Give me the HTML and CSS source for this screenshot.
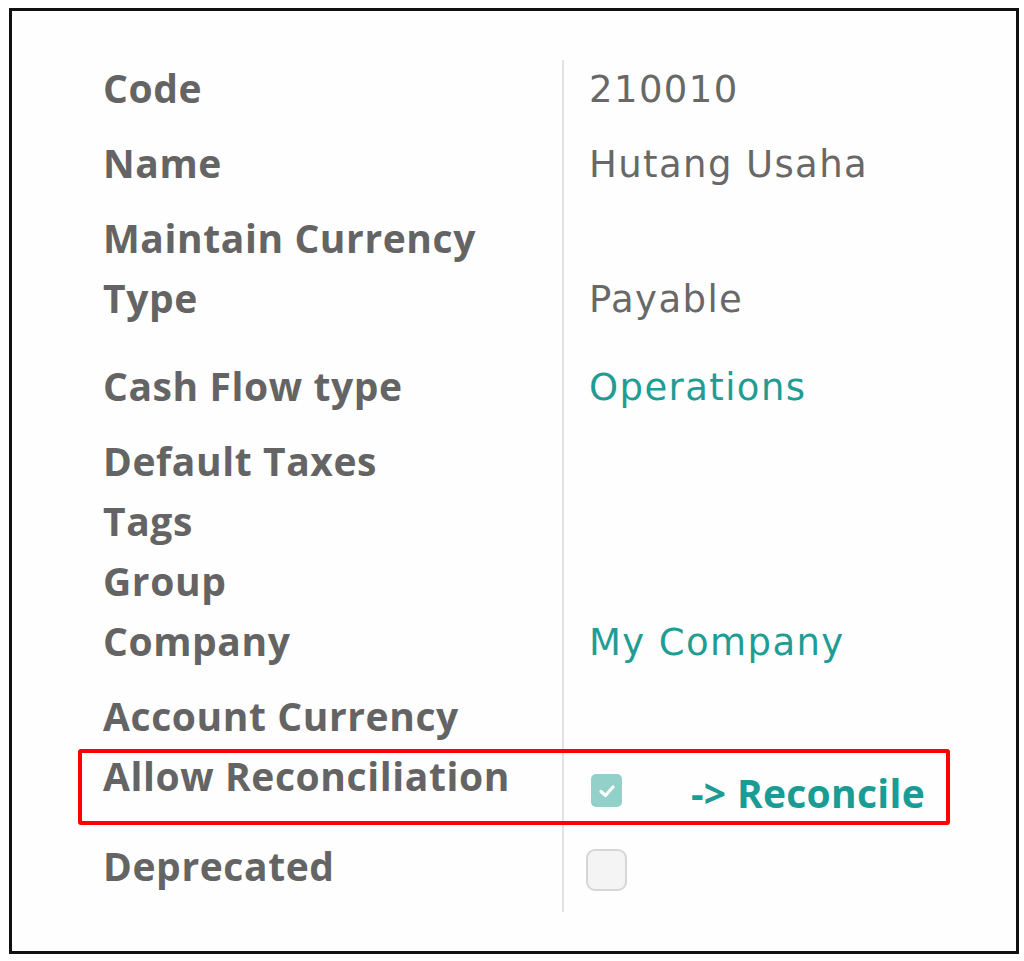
FILE: index.html
```html
<!DOCTYPE html>
<html>
<head>
    <title>Account</title>
    <link rel="stylesheet" href="styles.css">
</head>
<body>
    <div class="frame">
        <div class="sheet">
            <div class="row row-field">
                <div class="label">Code</div>
                <div class="value">210010</div>
            </div>
            <div class="row row-field">
                <div class="label">Name</div>
                <div class="value">Hutang Usaha</div>
            </div>
            <div class="row">
                <div class="label">Maintain Currency</div>
                <div class="value"></div>
            </div>
            <div class="row row-select">
                <div class="label">Type</div>
                <div class="value">Payable</div>
            </div>
            <div class="row row-field">
                <div class="label">Cash Flow type</div>
                <div class="value link">Operations</div>
            </div>
            <div class="row">
                <div class="label">Default Taxes</div>
                <div class="value"></div>
            </div>
            <div class="row">
                <div class="label">Tags</div>
                <div class="value"></div>
            </div>
            <div class="row">
                <div class="label">Group</div>
                <div class="value"></div>
            </div>
            <div class="row row-field">
                <div class="label">Company</div>
                <div class="value link">My Company</div>
            </div>
            <div class="row">
                <div class="label">Account Currency</div>
                <div class="value"></div>
            </div>
            <div class="row row-check">
                <div class="label">Allow Reconciliation</div>
                <div class="value check-cell">
                    <span class="checkbox checked">
                        <svg width="20" height="20" viewBox="0 0 20 20"><polyline points="4,10.5 8.5,14.5 16,6" fill="none" stroke="#fff" stroke-width="3.2" stroke-linecap="round" stroke-linejoin="round"/></svg>
                    </span>
                    <a class="reconcile">-&gt; Reconcile</a>
                </div>
            </div>
            <div class="row row-last">
                <div class="label">Deprecated</div>
                <div class="value">
                    <span class="checkbox empty"></span>
                </div>
            </div>
        </div>
        <!-- highlight around the reconciliation row -->
        <div class="highlight"></div>
    </div>
</body>
</html>
```

FILE: styles.css
```css
body {
    margin: 0;
    background-color: #ffffff;
}
.frame {
    position: relative;
    margin: 8px 0 0 9px;
    width: 1010px;
    height: 946px;
    box-sizing: border-box;
    border: 3px solid #111;
    background-color: #fefefe;
}
.sheet {
    padding: 49px 0 0 91px;
}
.row {
    display: flex;
    height: 60px;
}
.row-field {
    height: 75px;
}
.row-select {
    height: 88px;
}
.row-check {
    height: 90px;
}
.row-last {
    height: 74px;
}
.label {
    width: 459px;
    padding-top: 2px;
    font-family: "Open Sans", sans-serif;
    font-weight: 700;
    font-size: 39px;
    letter-spacing: 0.6px;
    line-height: 52px;
    color: #646464;
    white-space: nowrap;
}
.value {
    flex: 1;
    border-left: 2px solid #e2e2e2;
    padding: 4px 0 0 25px;
    font-family: "DejaVu Sans", sans-serif;
    font-size: 37px;
    letter-spacing: 1.4px;
    line-height: 52px;
    color: #686868;
    white-space: nowrap;
}
.link {
    color: #1f9d95;
}
.check-cell {
    display: flex;
    align-items: flex-start;
    padding-top: 0;
}
.checkbox {
    display: flex;
    align-items: center;
    justify-content: center;
    box-sizing: border-box;
}
.checkbox.checked {
    width: 31px;
    height: 33px;
    margin: 26px 0 0 2px;
    border-radius: 5px;
    background-color: #93d0ca;
}
.checkbox.empty {
    width: 41px;
    height: 42px;
    margin: 7px 0 0 -3px;
    border: 2px solid #d6d6d6;
    border-radius: 9px;
    background-color: #f4f4f4;
}
.reconcile {
    margin: 19px 0 0 69px;
    font-family: "Open Sans", sans-serif;
    font-weight: 700;
    font-size: 39px;
    letter-spacing: 0.3px;
    line-height: 52px;
    color: #1a9c94;
}
.highlight {
    position: absolute;
    left: 66px;
    top: 738px;
    width: 872px;
    height: 76px;
    box-sizing: border-box;
    border: 4px solid #ff0000;
    border-radius: 3px;
}
```
